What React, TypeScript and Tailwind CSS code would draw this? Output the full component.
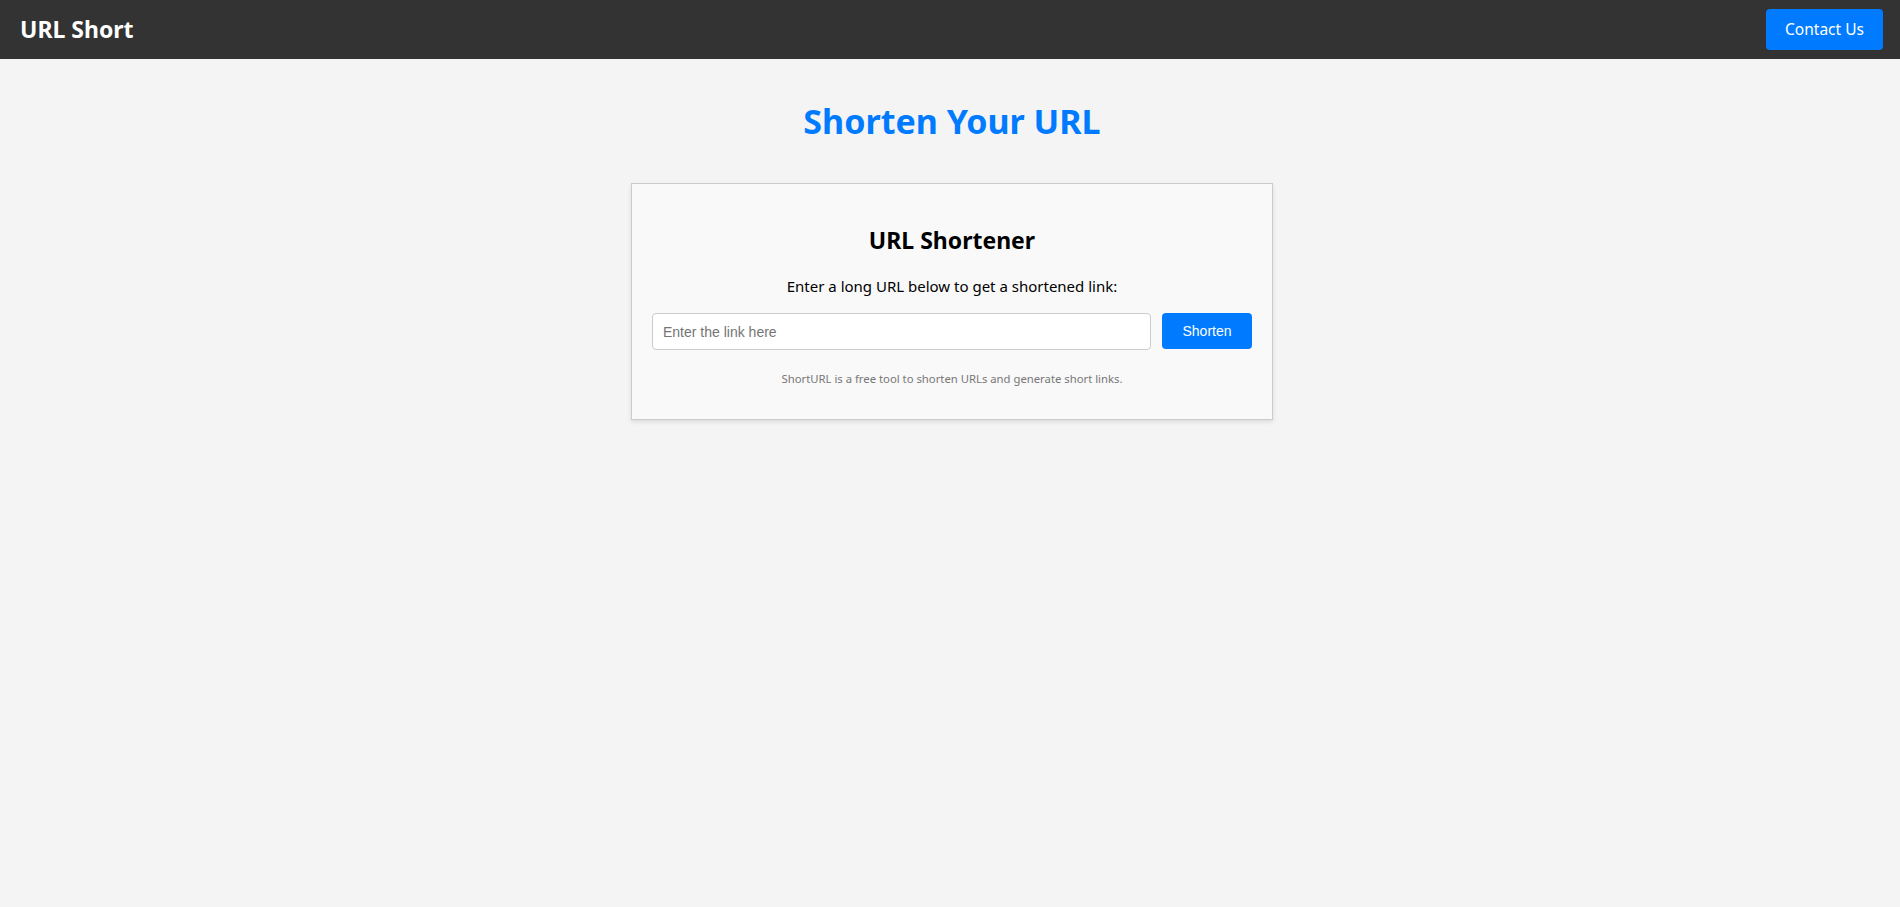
import React, { useState } from 'react';

export default function App() {
  const [url, setUrl] = useState('');

  return (
    <div className="min-h-screen bg-[#f4f4f4] font-['Noto_Sans',sans-serif] text-black">
      {/* top bar */}
      <nav className="flex h-[59px] items-center justify-between bg-[#333333] pl-5 pr-[17px]">
        <span className="text-[23px] font-bold text-white">URL Short</span>
        <button className="h-[41px] w-[117px] rounded-[4px] bg-[#007bff] text-[15.5px] text-white hover:bg-[#0069d9]">
          Contact Us
        </button>
      </nav>

      <main className="flex flex-col items-center pl-1">
        <h1 className="mt-[38px] mb-[38px] text-[34px] leading-[48px] font-bold text-[#007bff]">
          Shorten Your URL
        </h1>

        <div className="w-[642px] border border-[#cccccc] bg-[#f9f9f9] p-5 text-center shadow-[0_2px_4px_rgba(0,0,0,0.1)]">
          <h2 className="mt-5 mb-5 text-[23px] leading-8 font-bold">URL Shortener</h2>
          <p className="mb-4 text-[15px] leading-[21px]">Enter a long URL below to get a shortened link:</p>

          <div className="flex gap-[11px]">
            <input
              type="text"
              value={url}
              onChange={(e) => setUrl(e.target.value)}
              placeholder="Enter the link here"
              className="h-[37px] flex-1 rounded-[4px] border border-[#cccccc] bg-white px-[10px] font-['Liberation_Sans',Arial,sans-serif] text-[14px] outline-none placeholder:text-[#757575]"
            />
            <button className="h-[36px] w-[90px] rounded-[4px] bg-[#007bff] font-['Liberation_Sans',Arial,sans-serif] text-[14px] text-white hover:bg-[#0069d9]">
              Shorten
            </button>
          </div>

          <p className="mt-[21px] mb-3 text-[11.3px] leading-4 text-[#777777]">
            ShortURL is a free tool to shorten URLs and generate short links.
          </p>
        </div>
      </main>
    </div>
  );
}
